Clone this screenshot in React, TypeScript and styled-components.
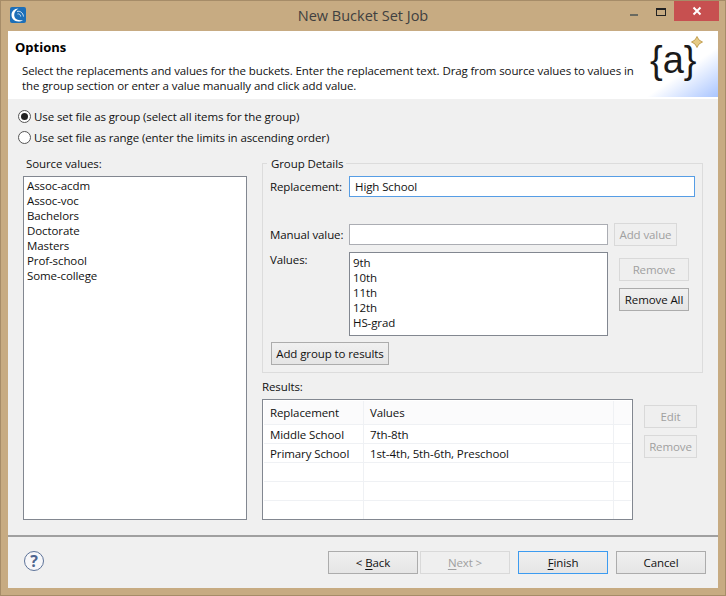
import React from "react";
import styled, { createGlobalStyle } from "styled-components";

const GlobalStyle = createGlobalStyle`
  html, body {
    margin: 0;
    padding: 0;
    background: #c7ab82;
  }
  * {
    box-sizing: border-box;
  }
`;

const Win = styled.div`
  width: 726px;
  height: 596px;
  display: flex;
  flex-direction: column;
  background: #c7ab82;
  border: 1px solid #a68c68;
  padding: 0 7px 7px;
  font-family: "Open Sans", "Noto Sans", sans-serif;
  font-size: 11.5px;
  letter-spacing: -0.1px;
  line-height: 15px;
  color: #111;
  overflow: hidden;
`;

const TitleBar = styled.div`
  height: 30px;
  flex: none;
  display: flex;
  align-items: flex-start;
  position: relative;
`;

const AppIcon = styled.svg`
  width: 16px;
  height: 16px;
  margin: 6px 0 0 2px;
`;

const Title = styled.div`
  position: absolute;
  left: 0;
  right: 0;
  top: 6px;
  text-align: center;
  font-size: 14.5px;
  letter-spacing: 0;
  line-height: 18px;
  color: #404040;
`;

const WinControls = styled.div`
  margin-left: auto;
  display: flex;
  align-items: flex-start;
  margin-right: -1px;
`;

const MinBtn = styled.div`
  width: 8px;
  height: 2px;
  background: #6a6a60;
  margin: 13px 18px 0 0;
`;

const MaxBtn = styled.div`
  width: 10px;
  height: 8px;
  border: 1px solid #222;
  border-top-width: 2px;
  margin: 7px 8px 0 0;
`;

const CloseBtn = styled.div`
  width: 45px;
  height: 20px;
  background: #c75050;
  display: flex;
  align-items: center;
  justify-content: center;
`;

const Content = styled.div`
  flex: 1;
  display: flex;
  flex-direction: column;
  background: #f0f0f0;
`;

const Header = styled.div`
  height: 68px;
  flex: none;
  position: relative;
  background: #fff;
  border-bottom: 2px solid;
  border-image: linear-gradient(#a0a0a0 50%, #fff 50%) 1;
  padding: 8px 7px 0;
`;

const HeaderTitle = styled.div`
  font-weight: 700;
  font-size: 13px;
  letter-spacing: 0;
  line-height: 16px;
  color: #000;
`;

const HeaderText = styled.div`
  margin: 8px 0 0 7px;
  width: 612px;
  position: relative;
  z-index: 1;
`;

const LogoCorner = styled.div`
  position: absolute;
  right: 0;
  top: 0;
  bottom: 0;
  width: 76px;
  background: linear-gradient(145deg, #fff 58%, #a9c5ff 100%);
`;

const LogoText = styled.div`
  font-family: "Liberation Sans", sans-serif;
  font-size: 38px;
  letter-spacing: 0;
  line-height: 40px;
  color: #1a1a1a;
  position: absolute;
  left: 8px;
  top: 9px;
`;

const LogoStar = styled.svg`
  position: absolute;
  left: 49px;
  top: 5px;
  width: 12px;
  height: 12px;
`;

const Body = styled.div`
  flex: 1;
  padding: 0 15px 0;
  display: flex;
  flex-direction: column;
`;

const RadioGroup = styled.div`
  padding-top: 7px;
  margin-bottom: 16px;
`;

const RadioRow = styled.label`
  height: 21px;
  display: flex;
  align-items: center;
  gap: 3px;
  margin-left: -5px;
`;

const RadioDot = styled.span<{ $on?: boolean }>`
  width: 13px;
  height: 13px;
  border-radius: 50%;
  border: 1px solid #555;
  background: #fff;
  display: flex;
  align-items: center;
  justify-content: center;
  &::after {
    content: "";
    width: 7px;
    height: 7px;
    border-radius: 50%;
    background: ${(p) => (p.$on ? "#222" : "transparent")};
  }
`;

const Columns = styled.div`
  display: flex;
  gap: 15px;
`;

const LeftCol = styled.div`
  width: 224px;
  flex: none;
`;

const RightCol = styled.div`
  width: 441px;
  flex: none;
`;

const SourceLabel = styled.div`
  height: 15px;
  padding-left: 3px;
  margin-top: -8px;
  margin-bottom: 5px;
`;

const ListBox = styled.div<{ $h: number }>`
  height: ${(p) => p.$h}px;
  background: #fff;
  border: 1px solid #828790;
  padding: 1px 3px;
`;

const Fieldset = styled.div`
  height: 210px;
  border: 1px solid #dcdcdc;
  position: relative;
  padding: 12px 7px 0 7px;
  margin-top: -1px;
`;

const Legend = styled.div`
  position: absolute;
  top: -8px;
  left: 4px;
  background: #f0f0f0;
  padding: 0 3px 0 4px;
`;

const FormRow = styled.div<{ $top: number }>`
  display: flex;
  align-items: flex-start;
  margin-top: ${(p) => p.$top}px;
`;

const FieldLabel = styled.div<{ $flush?: boolean }>`
  width: 79px;
  flex: none;
  padding-top: ${(p) => (p.$flush ? 0 : 3)}px;
`;

const Input = styled.div<{ $w: number; $focus?: boolean }>`
  width: ${(p) => p.$w}px;
  height: 21px;
  background: #fff;
  border: 1px solid ${(p) => (p.$focus ? "#569de5" : "#abadb3")};
  padding: 2px 5px;
`;

const ValuesList = styled(ListBox)`
  width: 259px;
  padding: 2px 3px;
`;

const Btn = styled.div<{ $w: number; $off?: boolean; $def?: boolean; $ml?: number; $mt?: number }>`
  width: ${(p) => p.$w}px;
  height: 23px;
  flex: none;
  margin-left: ${(p) => p.$ml ?? 0}px;
  margin-top: ${(p) => p.$mt ?? 0}px;
  display: flex;
  align-items: center;
  justify-content: center;
  border: 1px solid ${(p) => (p.$off ? "#d9d9d9" : p.$def ? "#3c9bf0" : "#acacac")};
  background: ${(p) => (p.$off ? "#efefef" : "linear-gradient(#f0f0f0, #e5e5e5)")};
  color: ${(p) => (p.$off ? "#a0a0a0" : "#111")};
  & u {
    text-underline-offset: 2px;
  }
`;

const SideBtns = styled.div`
  display: flex;
  flex-direction: column;
  gap: 7px;
  margin: 6px 0 0 11px;
`;

const ResultsLabel = styled.div`
  height: 15px;
  margin-top: 6px;
  margin-bottom: 5px;
`;

const ResultsRow = styled.div`
  display: flex;
`;

const Table = styled.div`
  width: 371px;
  height: 121px;
  background: #fff;
  border: 1px solid #828790;
  padding: 1px 1px 0;
  flex: none;
`;

const TRow = styled.div<{ $head?: boolean }>`
  display: grid;
  grid-template-columns: 100px 250px 18px;
  height: ${(p) => (p.$head ? 24 : 19)}px;
  border-bottom: 1px solid #eff1f4;
  background: ${(p) => (p.$head ? "#fbfbfc" : "#fff")};
  &:last-child {
    height: 18px;
    border-bottom: none;
  }
`;

const TCell = styled.div<{ $head?: boolean }>`
  border-right: 1px solid #eff1f4;
  padding: ${(p) => (p.$head ? "4px 0 0 6px" : "2px 0 0 6px")};
  white-space: nowrap;
  &:last-child {
    border-right: none;
  }
`;

const ResultBtns = styled.div`
  display: flex;
  flex-direction: column;
  gap: 7px;
  margin: 6px 0 0 11px;
`;

const Footer = styled.div`
  height: 53px;
  flex: none;
  border-top: 2px solid;
  border-image: linear-gradient(#a0a0a0 50%, #fff 50%) 1;
  display: flex;
  align-items: flex-start;
  padding: 14px 12px 0 16px;
`;

const Help = styled.div`
  width: 20px;
  height: 20px;
  border-radius: 50%;
  border: 1px solid #5d7399;
  color: #4d6590;
  font-weight: 700;
  font-size: 16px;
  letter-spacing: 0;
  line-height: 18px;
  text-align: center;
  background: #f7f7f9;
`;

const FooterBtns = styled.div`
  margin-left: auto;
  display: flex;
`;

const sources = ["Assoc-acdm", "Assoc-voc", "Bachelors", "Doctorate", "Masters", "Prof-school", "Some-college"];
const values = ["9th", "10th", "11th", "12th", "HS-grad"];
const rows = [
  ["Middle School", "7th-8th"],
  ["Primary School", "1st-4th, 5th-6th, Preschool"],
  ["", ""],
  ["", ""],
  ["", ""],
];

export default function App() {
  return (
    <Win>
      <GlobalStyle />
      <TitleBar>
        <AppIcon viewBox="0 0 16 16">
          <rect width="16" height="16" rx="2" fill="#1d6fb8" />
          <path d="M8.5 1.5C4 1.5 1.5 4.5 1.5 8s2.5 6.5 7 6.5c1.8 0 3.2-.5 4.5-1.5-1 .3-2 .4-3 .3C6.5 13 4.2 11 4.2 8S6 3 8.5 1.5z" fill="#fff" />
          <path d="M7 4.5c3-1 6 1.200 6.500 5M7.500 7c1.500-.5 3 .5 3.200 2.500" fill="none" stroke="#cfe2f3" strokeWidth="1" />
        </AppIcon>
        <Title>New Bucket Set Job</Title>
        <WinControls>
          <MinBtn />
          <MaxBtn />
          <CloseBtn>
            <svg width="10" height="10" viewBox="0 0 10 10">
              <path d="M1.500 1.500l7 7M8.500 1.500l-7 7" stroke="#fff" strokeWidth="2" />
            </svg>
          </CloseBtn>
        </WinControls>
      </TitleBar>
      <Content>
        <Header>
          <HeaderTitle>Options</HeaderTitle>
          <HeaderText>
            Select the replacements and values for the buckets. Enter the replacement text. Drag from source values to values in the group section or enter a value manually and click add value.
          </HeaderText>
          <LogoCorner>
            <LogoText>{"{a}"}</LogoText>
            <LogoStar viewBox="0 0 12 12">
              <path d="M6 .5L8 4l3.500 2L8 8l-2 3.500L4 8 .5 6 4 4z" fill="#e6cb85" stroke="#b8923c" strokeWidth=".8" />
            </LogoStar>
          </LogoCorner>
        </Header>
        <Body>
          <RadioGroup>
            <RadioRow>
              <RadioDot $on />
              Use set file as group (select all items for the group)
            </RadioRow>
            <RadioRow>
              <RadioDot />
              Use set file as range (enter the limits in ascending order)
            </RadioRow>
          </RadioGroup>
          <Columns>
            <LeftCol>
              <SourceLabel>Source values:</SourceLabel>
              <ListBox $h={344}>
                {sources.map((s) => (
                  <div key={s}>{s}</div>
                ))}
              </ListBox>
            </LeftCol>
            <RightCol>
              <Fieldset>
                <Legend>Group Details</Legend>
                <FormRow $top={0}>
                  <FieldLabel>Replacement:</FieldLabel>
                  <Input $w={346} $focus>High School</Input>
                </FormRow>
                <FormRow $top={27}>
                  <FieldLabel>Manual value:</FieldLabel>
                  <Input $w={259} />
                  <Btn $w={63} $off $ml={6} $mt={-1}>Add value</Btn>
                </FormRow>
                <FormRow $top={6}>
                  <FieldLabel $flush>Values:</FieldLabel>
                  <ValuesList $h={84}>
                    {values.map((v) => (
                      <div key={v}>{v}</div>
                    ))}
                  </ValuesList>
                  <SideBtns>
                    <Btn $w={70} $off>Remove</Btn>
                    <Btn $w={70}>Remove All</Btn>
                  </SideBtns>
                </FormRow>
                <FormRow $top={6}>
                  <Btn $w={118} $ml={1}>Add group to results</Btn>
                </FormRow>
              </Fieldset>
              <ResultsLabel>Results:</ResultsLabel>
              <ResultsRow>
                <Table>
                  <TRow $head>
                    <TCell $head>Replacement</TCell>
                    <TCell $head>Values</TCell>
                    <TCell $head />
                  </TRow>
                  {rows.map((r, i) => (
                    <TRow key={i}>
                      <TCell>{r[0]}</TCell>
                      <TCell>{r[1]}</TCell>
                      <TCell />
                    </TRow>
                  ))}
                </Table>
                <ResultBtns>
                  <Btn $w={53} $off>Edit</Btn>
                  <Btn $w={53} $off>Remove</Btn>
                </ResultBtns>
              </ResultsRow>
            </RightCol>
          </Columns>
        </Body>
        <Footer>
          <Help>?</Help>
          <FooterBtns>
            <Btn $w={90}>&lt;&nbsp;<u>B</u>ack</Btn>
            <Btn $w={90} $off $ml={2}><u>N</u>ext&nbsp;&gt;</Btn>
            <Btn $w={90} $def $ml={8}><u>F</u>inish</Btn>
            <Btn $w={90} $ml={8}>Cancel</Btn>
          </FooterBtns>
        </Footer>
      </Content>
    </Win>
  );
}
